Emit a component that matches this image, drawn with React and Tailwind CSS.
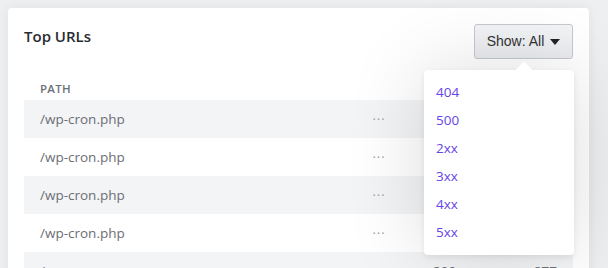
import { useState } from "react";

const rows = [
  { path: "/wp-cron.php", status: "", count: "" },
  { path: "/wp-cron.php", status: "", count: "" },
  { path: "/wp-cron.php", status: "", count: "" },
  { path: "/wp-cron.php", status: "", count: "" },
  { path: "/", status: "200", count: "877" },
];

const filters = ["404", "500", "2xx", "3xx", "4xx", "5xx"];

function App() {
  const [open] = useState(true);
  return (
    <div className="h-[268px] w-[608px] overflow-hidden bg-[#eeeff1] pl-2 pt-2 font-['Open_Sans',sans-serif]">
      <div className="relative h-[280px] w-[581px] rounded bg-white shadow-[0_0_12px_rgba(0,0,0,0.06)]">
        <div className="flex items-start justify-between pl-4 pr-4 pt-4">
          <h2 className="pt-[1px] text-[15px] font-semibold text-[#2a2c30]">Top URLs</h2>
          <div className="relative">
            <button className="flex h-[35px] w-[99px] items-center justify-center gap-1.5 rounded-[3px] border border-[#c5c8ce] bg-gradient-to-b from-[#f3f4f6] to-[#e9ebee] font-['Liberation_Sans',sans-serif] text-[14px] text-[#333]">
              Show: All
              <svg width="10" height="6" viewBox="0 0 10 6">
                <path d="M0 0h10L5 6z" fill="#222" />
              </svg>
            </button>
            {open && (
              <div className="absolute right-[-1px] top-[46px] z-10 w-[150px] rounded bg-white pb-[9px] pt-[8px] shadow-[0_0_80px_rgba(0,0,0,0.14),0_2px_6px_rgba(0,0,0,0.08)]">
                <div className="absolute -top-[6px] right-[44px] h-3 w-3 rotate-45 bg-white" />
                {filters.map((f) => (
                  <div key={f} className="relative px-3 py-[4px] text-[13.5px] leading-[20px] text-[#6545e6]">
                    {f}
                  </div>
                ))}
              </div>
            )}
          </div>
        </div>
        <table className="ml-4 mt-[21px] w-[549px] table-fixed text-left">
          <thead>
            <tr>
              <th className="px-4 pb-[3px] text-[11.5px] font-semibold uppercase tracking-wide text-[#6b6f78]">Path</th>
              <th className="w-[40px]"></th>
              <th className="w-[90px]"></th>
              <th className="w-[84px]"></th>
            </tr>
          </thead>
          <tbody>
            {rows.map((r, i) => (
              <tr key={i} className={i % 2 === 0 ? "h-[38px] bg-[#f3f4f6]" : "h-[38px] bg-white"}>
                <td className="px-4 text-[13.5px] text-[#6b6e75]">{r.path}</td>
                <td className="text-center text-[13px] tracking-[1px] text-[#a0a4ab]">{r.status ? "" : "···"}</td>
                <td className="pl-[34px] text-[13.5px] text-[#6b6e75]">{r.status}</td>
                <td className="pr-4 text-right text-[13.5px] text-[#6b6e75]">{r.count}</td>
              </tr>
            ))}
          </tbody>
        </table>
      </div>
    </div>
  );
}

export default App;
